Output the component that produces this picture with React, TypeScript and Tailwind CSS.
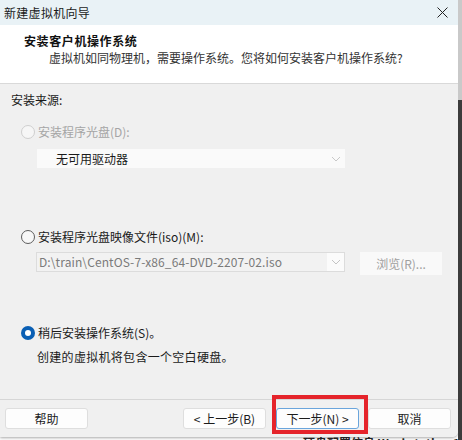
import React from "react";

const font = { fontFamily: '"Segoe UI", "Noto Sans CJK SC", "Noto Sans", sans-serif' };

const Chevron = ({ color = "#b5b5b5" }: { color?: string }) => (
  <svg width="10" height="6" viewBox="0 0 10 6">
    <polyline points="1,1 5,5 9,1" fill="none" stroke={color} strokeWidth="1" />
  </svg>
);

const Radio = ({ state }: { state: "disabled" | "off" | "on" }) => {
  if (state === "on")
    return (
      <span className="w-[14px] h-[14px] rounded-full bg-[#0a5fb4] flex items-center justify-center shrink-0">
        <span className="w-[6px] h-[6px] rounded-full bg-white" />
      </span>
    );
  return (
    <span
      className={
        state === "disabled"
          ? "w-[14px] h-[14px] rounded-full border border-[#cfcfcf] bg-[#f6f6f6] shrink-0"
          : "w-[14px] h-[14px] rounded-full border border-[#5c5c5c] bg-[#f7f7f7] shrink-0"
      }
    />
  );
};

const WizardButton = ({ label, focused = false }: { label: string; focused?: boolean }) => (
  <div
    className={
      focused
        ? "w-[83px] h-[21px] rounded-[3px] border border-[#6aa5dc] bg-[#fdfdfd] flex items-center justify-center text-[12px] text-[#1b1b1b]"
        : "w-[83px] h-[21px] rounded-[3px] border border-[#dedede] bg-[#fdfdfd] flex items-center justify-center text-[12px] text-[#1b1b1b]"
    }
  >
    {label}
  </div>
);

export default function App() {
  return (
    <div className="w-[462px] h-[440px] overflow-hidden bg-white flex" style={font}>
      <div className="w-[458px] flex flex-col">
        <div className="h-[437px] flex flex-col rounded-br-[6px] overflow-hidden shadow-[0_1px_3px_rgba(0,0,0,0.35)]">
          {/* title bar */}
          <div className="h-[25px] bg-[#e9f2f6] flex items-center justify-between pl-[4px] pr-[10px]">
            <span className="text-[12px] text-[#1a1a1a] tracking-[0.3px]">新建虚拟机向导</span>
            <svg width="11" height="11" viewBox="0 0 11 11">
              <path d="M0.5 0.5 L10.5 10.5 M10.5 0.5 L0.5 10.5" stroke="#222" strokeWidth="1" />
            </svg>
          </div>

          {/* header */}
          <div className="h-[59px] bg-white border-b border-[#d9d9d9] pl-[24px] pt-[8px]">
            <div className="text-[12px] font-bold text-[#111] leading-[16px] tracking-[0.6px]">安装客户机操作系统</div>
            <div className="text-[12px] text-[#333] leading-[16px] mt-[1px] pl-[25px]">
              虚拟机如同物理机，需要操作系统。您将如何安装客户机操作系统?
            </div>
          </div>

          {/* body */}
          <div className="flex-1 bg-[#f0f0f0] pl-[11px] pt-[8px] text-[12px] text-[#1a1a1a]">
            <div className="leading-[16px]">安装来源:</div>

            <div className="flex items-center gap-[3px] mt-[16px] pl-[10px] h-[16px]">
              <Radio state="disabled" />
              <span className="text-[#a5a5a5] leading-[16px]">安装程序光盘(D):</span>
            </div>
            <div className="mt-[9px] ml-[26px] w-[308px] h-[19px] bg-[#fafafa] flex items-center justify-between pl-[19px] pr-[4px]">
              <span className="leading-[16px]">无可用驱动器</span>
              <Chevron color="#c8c8c8" />
            </div>

            <div className="flex items-center gap-[3px] mt-[61px] pl-[10px] h-[16px]">
              <Radio state="off" />
              <span className="leading-[16px]">安装程序光盘映像文件(iso)(M):</span>
            </div>
            <div className="flex items-start mt-[7px]">
              <div className="ml-[25px] w-[309px] h-[20px] border border-[#dcdcdc] bg-[#f2f2f2] flex">
                <span className="flex-1 pl-[2px] text-[#7a7a7a] leading-[18px] tracking-[0.1px]">
                  D:\train\CentOS-7-x86_64-DVD-2207-02.iso
                </span>
                <span className="w-[17px] bg-[#fbfbfb] flex items-center justify-center">
                  <Chevron color="#c4c4c4" />
                </span>
              </div>
              <div className="ml-[15px] w-[82px] h-[23px] bg-[#f9f9f9] flex items-center justify-center text-[#a0a0a0]">
                浏览(R)...
              </div>
            </div>

            <div className="flex items-center gap-[3px] mt-[50px] pl-[10px] h-[16px]">
              <Radio state="on" />
              <span className="leading-[16px]">稍后安装操作系统(S)。</span>
            </div>
            <div className="mt-[8px] pl-[26px] leading-[16px] tracking-[0.3px]">创建的虚拟机将包含一个空白硬盘。</div>
          </div>

          {/* footer */}
          <div className="h-[38px] bg-[#f0f0f0] border-t border-[#d6d6d6] flex items-start pt-[8px] pl-[5px]">
            <WizardButton label="帮助" />
            <div className="ml-[95px]">
              <WizardButton label="< 上一步(B)" />
            </div>
            <div className="ml-[10px] relative">
              <WizardButton label="下一步(N) >" focused />
              <div className="absolute left-[-4px] top-[-13px] w-[96px] h-[39px] border-[4px] border-[#e5242b]" />
            </div>
            <div className="ml-[9px]">
              <WizardButton label="取消" />
            </div>
          </div>
        </div>
        <div className="flex-1 pl-[303px] text-[12px] font-bold text-[#222] leading-[12px] whitespace-nowrap overflow-hidden">
          硬盘配置信息 Workstation 17
        </div>
      </div>
      <div className="w-[4px] flex flex-col">
        <div className="h-[100px] bg-[#c9c9c9]" />
        <div className="flex-1 bg-[#3c3c3c]" />
      </div>
    </div>
  );
}
